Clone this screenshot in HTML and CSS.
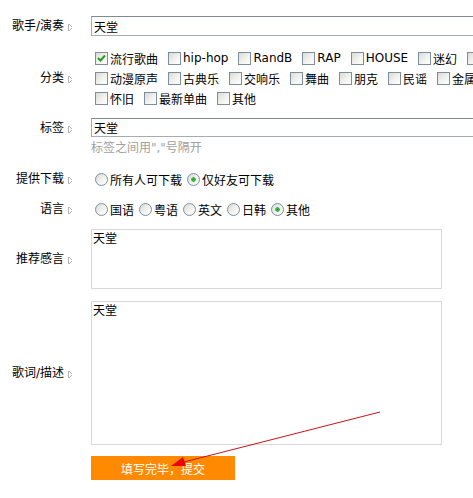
FILE: index.html
```html
<html>
    <head>
        <link rel="stylesheet" href="styles.css">
    </head>
    <body>
        <form id="song" class="song">
            <div class="row r1">
                <label class="lbl">歌手/演奏<i class="tri"></i></label>
                <input type="text" class="txt wide" value="天堂" />
            </div>
            <div class="row r2">
                <label class="lbl">分类<i class="tri"></i></label>
                <div class="cats">
                    <div class="line">
                        <span class="opt"><input type="checkbox" checked />流行歌曲</span>
                        <span class="opt"><input type="checkbox" />hip-hop</span>
                        <span class="opt"><input type="checkbox" />RandB</span>
                        <span class="opt"><input type="checkbox" />RAP</span>
                        <span class="opt"><input type="checkbox" />HOUSE</span>
                        <span class="opt"><input type="checkbox" />迷幻</span>
                        <span class="opt"><input type="checkbox" />摇滚</span>
                    </div>
                    <div class="line">
                        <span class="opt"><input type="checkbox" />动漫原声</span>
                        <span class="opt"><input type="checkbox" />古典乐</span>
                        <span class="opt"><input type="checkbox" />交响乐</span>
                        <span class="opt"><input type="checkbox" />舞曲</span>
                        <span class="opt"><input type="checkbox" />朋克</span>
                        <span class="opt"><input type="checkbox" />民谣</span>
                        <span class="opt"><input type="checkbox" />金属</span>
                    </div>
                    <div class="line">
                        <span class="opt"><input type="checkbox" />怀旧</span>
                        <span class="opt"><input type="checkbox" />最新单曲</span>
                        <span class="opt"><input type="checkbox" />其他</span>
                    </div>
                </div>
            </div>
            <div class="row r3">
                <label class="lbl">标签<i class="tri"></i></label>
                <div class="tagbox">
                    <input type="text" class="txt wide tag" value="天堂" />
                    <div class="hint">标签之间用","号隔开</div>
                </div>
            </div>
            <div class="row r4">
                <label class="lbl">提供下载<i class="tri"></i></label>
                <div class="radios">
                    <span class="rad"><input type="radio" name="dl" />所有人可下载</span>
                    <span class="rad"><input type="radio" name="dl" checked />仅好友可下载</span>
                </div>
            </div>
            <div class="row r5">
                <label class="lbl">语言<i class="tri"></i></label>
                <div class="radios">
                    <span class="rad"><input type="radio" name="lang" />国语</span>
                    <span class="rad"><input type="radio" name="lang" />粤语</span>
                    <span class="rad"><input type="radio" name="lang" />英文</span>
                    <span class="rad"><input type="radio" name="lang" />日韩</span>
                    <span class="rad"><input type="radio" name="lang" checked />其他</span>
                </div>
            </div>
            <div class="row r6">
                <label class="lbl">推荐感言<i class="tri"></i></label>
                <textarea class="area short">天堂</textarea>
            </div>
            <div class="row r7">
                <label class="lbl">歌词/描述<i class="tri"></i></label>
                <textarea class="area tall">天堂</textarea>
            </div>
            <div class="row r8">
                <span class="lbl"></span>
                <button type="button" class="submit">填写完毕，提交</button>
            </div>

            <svg class="arrow" width="473" height="498" viewBox="0 0 473 498">
                <line x1="380" y1="412" x2="180" y2="463" stroke="#d0101a" stroke-width="1" />
                <polygon points="171,466 183,457 186,466" fill="#ee0000" />
            </svg>
        </form>
    </body>
</html>
```

FILE: styles.css
```css
html, body{
    margin: 0;
    overflow: hidden;
}
body{
    font-family: "DejaVu Sans", "Noto Sans CJK SC", sans-serif;
    font-size: 12px;
    color: #000;
    background: #fff;
}
.song{
    position: relative;
    padding-top: 16px;
    width: 473px;
    height: 482px;
}
.row{
    display: flex;
    align-items: center;
    margin-bottom: 10px;
}
.lbl{
    flex: none;
    width: 72px;
    margin-right: 19px;
    text-align: right;
    white-space: nowrap;
    line-height: 16px;
}
.tri{
    display: inline-block;
    width: 4px;
    height: 7px;
    margin-left: 4px;
    vertical-align: -1px;
    background:
        linear-gradient(to top right, transparent 45%, #b5b5b5 46%, #b5b5b5 60%, transparent 61%) top/4px 4px no-repeat,
        linear-gradient(to bottom right, transparent 45%, #b5b5b5 46%, #b5b5b5 60%, transparent 61%) bottom/4px 4px no-repeat;
    border-left: 1px solid #b5b5b5;
    box-sizing: border-box;
}
.txt{
    font: inherit;
    height: 20px;
    padding: 1px 2px;
    box-sizing: border-box;
    border: 1px solid #a5acb2;
    border-top-color: #7f8a94;
    outline: none;
}
.wide{
    flex: none;
    width: 420px;
}
.r1{
    margin-bottom: 12px;
}
.cats{
    width: 382px;
    overflow: hidden;
}
.cats .line{
    display: flex;
    white-space: nowrap;
    height: 20px;
    align-items: center;
}
.opt{
    display: inline-flex;
    align-items: center;
    margin-right: 6px;
}
input[type=checkbox], input[type=radio]{
    -webkit-appearance: none;
    appearance: none;
    width: 13px;
    height: 13px;
    margin: 0 2px 0 4px;
    border: 1px solid #7b8ea3;
    background: linear-gradient(135deg, #dcdcd6 0%, #f2f2ee 55%, #ffffff 100%);
    box-sizing: border-box;
    flex: none;
}
input[type=checkbox]:checked{
    background:
        url("data:image/svg+xml;utf8,<svg xmlns='http://www.w3.org/2000/svg' width='11' height='11'><path d='M2 5 L4.5 7.5 L9 2.5' fill='none' stroke='%2321a121' stroke-width='2'/></svg>") center/11px 11px no-repeat,
        linear-gradient(135deg, #dcdcd6 0%, #f2f2ee 55%, #ffffff 100%);
}
input[type=radio]{
    border-radius: 50%;
}
input[type=radio]:checked{
    background:
        radial-gradient(circle, #2fa32f 0, #44b944 2px, transparent 2.6px),
        linear-gradient(135deg, #dcdcd6 0%, #f2f2ee 55%, #ffffff 100%);
}
.r3{
    align-items: flex-start;
    margin-bottom: 13px;
}
.tag{
    height: 19px;
}
.r3 .lbl{
    margin-top: 2px;
}
.hint{
    color: #a0a0a0;
    line-height: 16px;
    margin-top: 3px;
}
.radios{
    display: flex;
    white-space: nowrap;
    height: 20px;
    align-items: center;
}
.rad{
    display: inline-flex;
    align-items: center;
    margin-right: 1px;
}
.area{
    font: inherit;
    flex: none;
    width: 351px;
    padding: 2px 1px;
    box-sizing: border-box;
    border: 1px solid #d8d8d8;
    resize: none;
    outline: none;
    line-height: 14px;
}
.short{
    height: 60px;
}
.tall{
    height: 144px;
}
.r6{
    margin-bottom: 12px;
}
.r7{
    margin-bottom: 11px;
}
.submit{
    font: inherit;
    width: 144px;
    height: 24px;
    border: none;
    background: #ff8a00;
    color: #fff;
    padding: 0;
}
.arrow{
    position: absolute;
    left: 0;
    top: 0;
    pointer-events: none;
}
```
